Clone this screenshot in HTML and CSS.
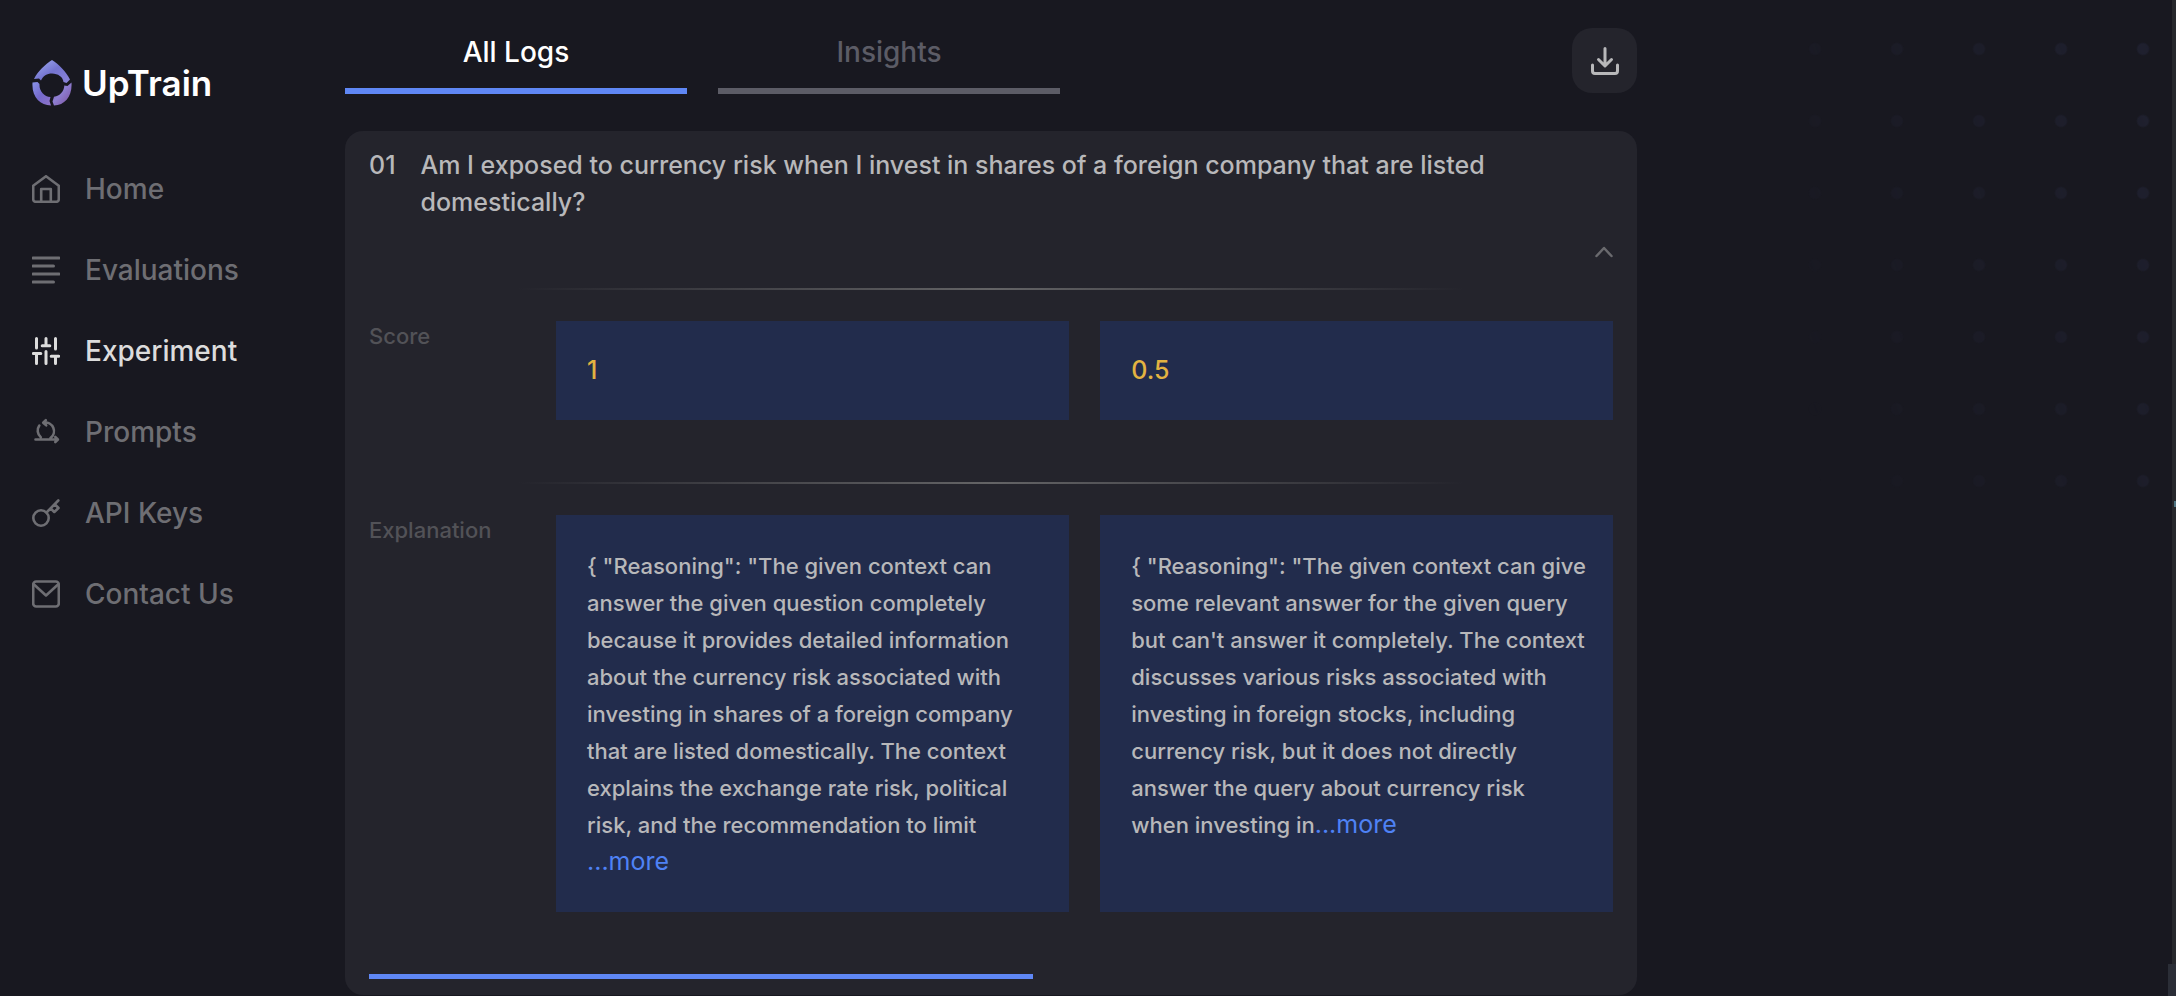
FILE: index.html
```html
<!DOCTYPE html>
<html lang="en">
<head>
<meta charset="utf-8">
<title>UpTrain – Experiment</title>
<link rel="stylesheet" href="styles.css">
</head>
<body>
<div class="page">
  <aside class="sidebar">
    <a class="brand" href="#">
      <svg class="brand-mark" viewBox="0 0 40 46" aria-hidden="true">
        <defs>
          <linearGradient id="mark-top" x1="0" y1="0" x2="1" y2="1">
            <stop offset="0" stop-color="#a3b0f5"/><stop offset=".5" stop-color="#7474d0"/><stop offset="1" stop-color="#8c84d8"/>
          </linearGradient>
          <linearGradient id="mark-left" x1="0" y1="0" x2="1" y2="1">
            <stop offset="0" stop-color="#8a94ea"/><stop offset=".5" stop-color="#7469cb"/><stop offset="1" stop-color="#8f74c8"/>
          </linearGradient>
          <linearGradient id="mark-right" x1="0" y1="0" x2="1" y2="1">
            <stop offset="0" stop-color="#7c4f9c"/><stop offset=".45" stop-color="#8e7fd2"/><stop offset="1" stop-color="#7c4f9c"/>
          </linearGradient>
        </defs>
        <path fill="url(#mark-top)" d="M20 0C27 4.500 34 11.500 38 19.500L34.500 23 31.500 22C31 17 26 13.500 20 13.500c-5 0-9 2.500-11 7L7 18.500 2 19C6 11 13 4.500 20 0z"/>
        <path fill="url(#mark-left)" d="M.5 22.500 5.500 22l2 2C7 31 12 36.500 18.500 37L17.500 41l1.500 4.500C8 45.500-.500 37 .5 22.500z"/>
        <path fill="url(#mark-right)" d="M39.500 22.500C40.500 36 33 45 22 45.500L20.500 41.500 22 36.700C28 36 32 31.500 32.300 25.500L35.500 26z"/>
      </svg>
      <span class="brand-name">UpTrain</span>
    </a>
    <nav class="nav">
      <a class="nav-item" href="#">
        <svg class="icon" viewBox="0 0 28 28" aria-hidden="true"><path d="M1.200 10.800 14 1.200l12.800 9.600v13.400a2.600 2.600 0 0 1-2.600 2.600H3.800a2.600 2.600 0 0 1-2.600-2.600z"/><path d="M9.200 26.500V14h9.600v12.500"/></svg>
        Home
      </a>
      <a class="nav-item" href="#">
        <svg class="icon icon-lines" viewBox="0 0 28 28" aria-hidden="true"><path d="M1 2h26M1 10h20.500M1 18h26M1 26h20.500"/></svg>
        Evaluations
      </a>
      <a class="nav-item nav-item-active" href="#" aria-current="page">
        <svg class="icon icon-lines" viewBox="0 0 28 28" aria-hidden="true"><path d="M4.500 1.500v9.500M1.200 16.500h7.600M4.500 16.500v10M14 1.500v7M10.200 8.700h7.600M14 14.500v12M23.500 1.500v10.500M19.200 19.300h7.600M23.500 19.300v7.200"/></svg>
        Experiment
      </a>
      <a class="nav-item" href="#">
        <svg class="icon" viewBox="0 0 28 28" aria-hidden="true"><path d="M8.800 19.200A8.700 8.700 0 0 1 7.300 7.500M12 4.600A8.600 8.600 0 0 1 18.500 20M13.800 2.200 11.200 4.700l3 2.600M3.500 21.500h22M23.300 19l2.600 2.500-2.600 2.500"/></svg>
        Prompts
      </a>
      <a class="nav-item" href="#">
        <svg class="icon" viewBox="0 0 28 28" aria-hidden="true"><circle cx="9" cy="19" r="7.700"/><path d="M14.500 13.500 26.300 1.500M22.700 5.200 26.500 9 22.300 13 18.500 9.300"/></svg>
        API Keys
      </a>
      <a class="nav-item" href="#">
        <svg class="icon" viewBox="0 0 28 28" aria-hidden="true"><rect x="1.200" y="1.500" width="25.600" height="25" rx="3"/><path d="M2 4.500 14 15.500 26 4.500"/></svg>
        Contact Us
      </a>
    </nav>
  </aside>

  <main class="main">
    <header class="toolbar">
      <div class="tabs" role="tablist">
        <button class="tab tab-active" role="tab" aria-selected="true">All Logs</button>
        <button class="tab" role="tab" aria-selected="false">Insights</button>
      </div>
      <button class="download" aria-label="Download logs">
        <svg class="download-icon" viewBox="0 0 28 28" aria-hidden="true"><path d="M14 1.500v17M7.500 12.500l6.500 6.500 6.500-6.500M1.500 18v6a2.500 2.500 0 0 0 2.500 2.500h20a2.500 2.500 0 0 0 2.500-2.500V18"/></svg>
      </button>
    </header>

    <article class="card">
      <h2 class="question">
        <span class="question-number">01</span>
        <span>Am I exposed to currency risk when I invest in shares of a foreign company that are listed domestically?</span>
      </h2>
      <button class="collapse" aria-label="Collapse">
        <svg class="collapse-icon" viewBox="0 0 18 12" aria-hidden="true"><path d="M1.500 10 9 2l7.500 8"/></svg>
      </button>

      <div class="divider"></div>
      <section class="row">
        <h3 class="row-label">Score</h3>
        <div class="cell cell-score">1</div>
        <div class="cell cell-score">0.5</div>
      </section>

      <div class="divider"></div>
      <section class="row">
        <h3 class="row-label">Explanation</h3>
        <p class="cell cell-text">{ "Reasoning": "The given context can answer the given question completely because it provides detailed information about the currency risk associated with investing in shares of a foreign company that are listed domestically. The context explains the exchange rate risk, political risk, and the recommendation to limit <button class="more">...more</button></p>
        <p class="cell cell-text">{ "Reasoning": "The given context can give some relevant answer for the given query but can't answer it completely. The context discusses various risks associated with investing in foreign stocks, including currency risk, but it does not directly answer the query about currency risk when&nbsp;investing in<button class="more">...more</button></p>
      </section>
      <div class="progress"></div>
    </article>
  </main>

  <div class="dots" aria-hidden="true"></div>
  <div class="scroll-track" aria-hidden="true"><span class="scroll-mark"></span></div>
  <div class="scroll-corner" aria-hidden="true"></div>
</div>
</body>
</html>
```

FILE: styles.css
```css
* {
  box-sizing: border-box;
}

body {
  margin: 0;
  background: #181820;
  color: #b8b8ba;
  font-family: Inter, "Liberation Sans", sans-serif;
  font-size: 22px;
  font-weight: 500;
}

button {
  border: 0;
  padding: 0;
  background: none;
  color: inherit;
  font: inherit;
  cursor: pointer;
}

h2,
h3,
p {
  margin: 0;
  font-weight: 500;
}

.page {
  position: relative;
  display: grid;
  grid-template-columns: 345px minmax(0, 12fr) minmax(0, 5fr);
  min-height: 100vh;
}

/* Sidebar */

.sidebar {
  padding: 60px 32px;
}

.brand {
  display: flex;
  align-items: center;
  gap: 10px;
  height: 46px;
  color: #fff;
  text-decoration: none;
}

.brand-mark {
  width: 40px;
  height: 46px;
}

.brand-name {
  font-size: 35px;
  font-weight: 600;
  line-height: 44px;
}

.nav {
  display: flex;
  flex-direction: column;
  gap: 41px;
  margin-top: 63px;
}

.nav-item {
  display: flex;
  align-items: center;
  gap: 25px;
  color: #6e6e73;
  font-size: 28px;
  line-height: 40px;
  text-decoration: none;
}

.nav-item-active {
  color: #dcdcdc;
}

.icon {
  flex: none;
  width: 28px;
  height: 28px;
  fill: none;
  stroke: currentColor;
  stroke-width: 2.6;
  stroke-linecap: round;
  stroke-linejoin: round;
}

.icon-lines {
  stroke-width: 3;
}

/* Tabs and download */

.main {
  padding-top: 28px;
}

.toolbar {
  display: flex;
  align-items: flex-start;
  justify-content: space-between;
}

.tabs {
  display: flex;
  gap: 31px;
}

.tab {
  width: 342px;
  padding-bottom: 12px;
  border-bottom: 6px solid #5c5c66;
  color: #5c5c66;
  font-size: 28px;
  line-height: 48px;
}

.tab-active {
  border-color: #5f87f5;
  color: #fff;
}

.download {
  display: grid;
  place-items: center;
  width: 65px;
  height: 65px;
  border-radius: 20px;
  background: #24242c;
}

.download-icon {
  width: 28px;
  height: 28px;
  fill: none;
  stroke: #b8b8ba;
  stroke-width: 3;
  stroke-linecap: round;
  stroke-linejoin: round;
}

/* Log card */

.card {
  display: flex;
  flex-direction: column;
  margin-top: 37px;
  padding: 16px 24px;
  border-radius: 18px;
  background: #24242c;
}

.question {
  display: flex;
  gap: 25px;
  font-size: 25px;
  line-height: 37px;
}

.question-number {
  flex: none;
}

.collapse {
  display: grid;
  place-items: center;
  align-self: flex-end;
  width: 18px;
  height: 32px;
  margin: 15px 0 20px;
}

.collapse-icon {
  width: 18px;
  height: 12px;
  fill: none;
  stroke: #6a6a6e;
  stroke-width: 2.5;
  stroke-linecap: round;
  stroke-linejoin: round;
}

.divider {
  height: 2px;
  margin: 0 12%;
  background: linear-gradient(90deg, transparent, #646466, transparent);
}

.row {
  display: grid;
  grid-template-columns: 156px minmax(0, 1fr) minmax(0, 1fr);
  gap: 31px;
  margin: 31px 0 62px;
}

.row-label {
  color: #525257;
  font-size: 22px;
  line-height: 31px;
}

.cell {
  background: #222c4c;
  line-height: 37px;
}

.cell-score {
  padding: 31px;
  color: #e3b341;
  font-size: 25px;
}

.cell-text {
  padding: 33px 20px 31px 31px;
}

.more {
  color: #4f82f5;
  font-size: 25px;
  font-weight: 400;
  line-height: 31px;
}

.progress {
  width: calc(100% * 8 / 15);
  height: 5px;
  background: #5f87f5;
}

/* Dotted backdrop, fading towards the bottom left */

.dots {
  position: absolute;
  top: 13px;
  right: 0;
  width: 402px;
  height: 504px;
  background: radial-gradient(circle, #202130 5px, transparent 7px) 0 0 / 82px 72px;
  mask-image: linear-gradient(250deg, #000, transparent 90%);
}

.scroll-track {
  position: absolute;
  top: 0;
  right: 0;
  bottom: 0;
  width: 4px;
  background: #27282c;
}

.scroll-mark {
  position: absolute;
  top: 501px;
  right: 0;
  width: 2px;
  height: 6px;
  background: #4f7482;
}

.scroll-corner {
  position: absolute;
  right: 0;
  bottom: 0;
  width: 8px;
  height: 32px;
  background: #2b2e37;
}
```
